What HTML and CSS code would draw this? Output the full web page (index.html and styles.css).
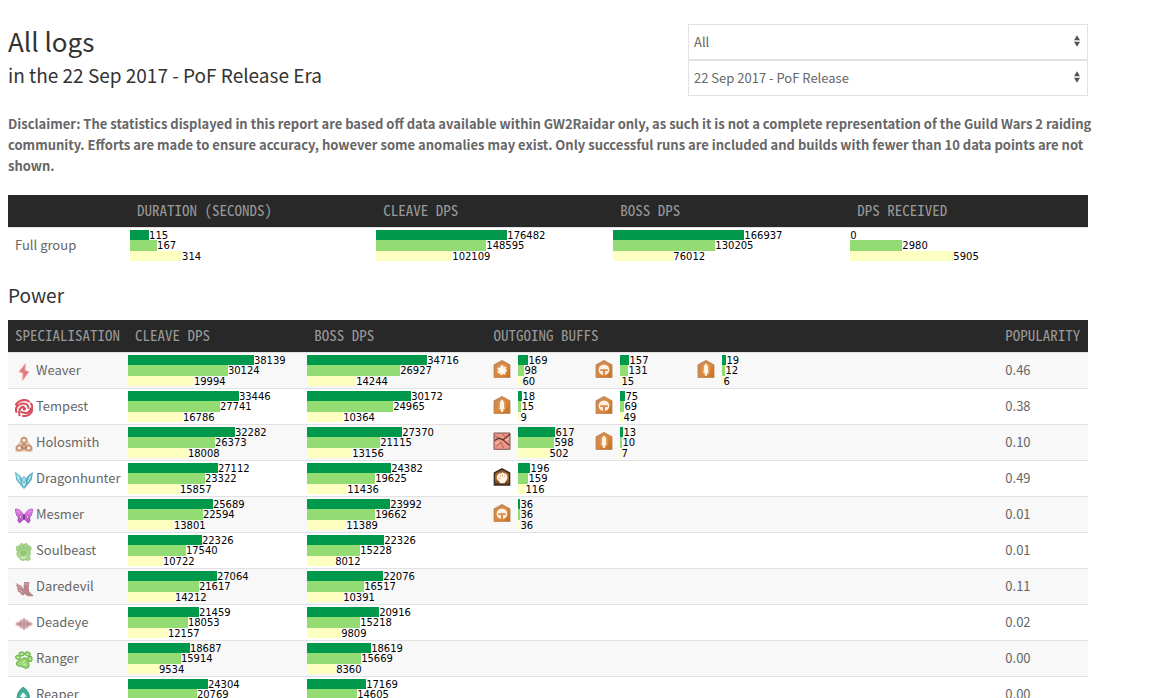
FILE: index.html
```html
<!DOCTYPE html>
<html lang="en">
<head>
<meta charset="utf-8">
<title>All logs - GW2Raidar</title>
<link rel="stylesheet" href="styles.css">
</head>
<body>
<svg class="defs" aria-hidden="true">
  <defs>
    <linearGradient id="amber" x1="0" y1="0" x2="1" y2="1"><stop offset="0" stop-color="#c48a60"/><stop offset=".5" stop-color="#d98a40"/><stop offset="1" stop-color="#c4701f"/></linearGradient>
    <linearGradient id="dark" x1="0" y1="0" x2="0" y2="1"><stop offset="0" stop-color="#8a5426"/><stop offset=".6" stop-color="#c07430"/><stop offset="1" stop-color="#4a3018"/></linearGradient>
    <linearGradient id="ice" x1="0" y1="0" x2="1" y2="1"><stop offset="0" stop-color="#a8e6f2"/><stop offset="1" stop-color="#3a9fbc"/></linearGradient>
    <linearGradient id="violet" x1="0" y1="0" x2="0" y2="1"><stop offset="0" stop-color="#f08cf2"/><stop offset="1" stop-color="#b44cc6"/></linearGradient>
  </defs>
  <symbol id="house" viewBox="0 0 18 18"><path d="M9 .4 17 4.800V17.600H1V4.800Z" fill="url(#amber)" stroke="#b87c4c" stroke-width=".8"/></symbol>
  <symbol id="burst" viewBox="0 0 18 18"><use href="#house"/><circle cx="9" cy="10" r="5.200" fill="#efb880" opacity=".7"/><path d="m9.500 4.600.9 3 3.200-.9-1.300 2.700 2.300 1.400-2.600.9.500 3-2.600-1.300-2 2-.6-2.700-3 .2 1.800-2.400-2.100-2 2.800-.2Z" fill="#fffaf0"/></symbol>
  <symbol id="helm" viewBox="0 0 18 18"><use href="#house"/><circle cx="9" cy="9.800" r="5.400" fill="#fff0e2"/><path d="M5.200 9.200h7.600v1.800h-2.700v4.200H7.900V11H5.200Z" fill="#d68c50"/></symbol>
  <symbol id="blade" viewBox="0 0 18 18"><use href="#house"/><ellipse cx="9" cy="9.500" rx="3.800" ry="6" fill="#e9a860" opacity=".7"/><path d="M9 3.600c1.500 1.200 2 2.600 2 4v4.200h.8v1h-1.600v3H7.800v-3H6.200v-1H7V7.600c0-1.400.5-2.800 2-4Z" fill="#fff4e4"/></symbol>
  <symbol id="fist" viewBox="0 0 18 18"><path d="M9 .9 16.600 5V17.100H1.400V5Z" fill="url(#dark)" stroke="#3a2c20" stroke-width="1.500"/><path d="M4.600 7 6.200 5.200 8 5.400 9.300 4.300l1.700.9 1.800.4 1.300 2 .2 3.200-1.600 2.800-1.200 1.600H7l-.8-1.800-2.200-2.300-.2-2.600Z" fill="#fff4e6"/><path d="m7 6.800.7 2.500m1.700-3 .3 2.700m2-2.400-.2 2.500M5 10l3 1" stroke="#cfa27a" stroke-width=".6"/></symbol>
  <symbol id="claw" viewBox="0 0 18 18"><path fill="#ef9486" stroke="#7c5450" stroke-width="1" d="M1 1H17V17.300H1Z"/><path d="M1.500 8.500 6 6.200l4 1.700L17 2.300M10 7.900l6.500 5.500" fill="none" stroke="#4a2e2c" stroke-width="1.200"/><path d="m2.800 14.800 5-4.400M9.500 1.500 12 5M1.500 3.500l4.500 2.700M8 10.300l2.500 5.700" fill="none" stroke="#8c5852" stroke-width=".8"/><path d="m2 12 4-2.500M12 8.500l4-2" stroke="#ffbcb0" stroke-width="1.100"/></symbol>
</svg>

<main class="page">
  <header class="top">
    <div class="titles">
      <h1>All logs</h1>
      <h2 class="era">in the 22 Sep 2017 - PoF Release Era</h2>
    </div>
    <form class="filters">
      <div class="pick">
        <select aria-label="Area"><option>All</option></select>
        <svg viewBox="0 0 6 12" aria-hidden="true"><path d="M3 .3 6 5.300H0ZM0 6.700H6L3 11.700Z"/></svg>
      </div>
      <div class="pick">
        <select aria-label="Era"><option>22 Sep 2017 - PoF Release</option></select>
        <svg viewBox="0 0 6 12" aria-hidden="true"><path d="M3 .3 6 5.300H0ZM0 6.700H6L3 11.700Z"/></svg>
      </div>
    </form>
  </header>

  <p class="note">Disclaimer: The statistics displayed in this report are based off data available within GW2Raidar only, as such it is not a complete representation of the Guild Wars 2 raiding community. Efforts are made to ensure accuracy, however some anomalies may exist. Only successful runs are included and builds with fewer than 10 data points are not shown.</p>

  <table class="group">
    <colgroup><col class="g-name"><col class="g-time"><col class="g-stat"><col class="g-stat"><col></colgroup>
    <thead><tr><td></td><th scope="col">Duration (seconds)</th><th scope="col">Cleave DPS</th><th scope="col">Boss DPS</th><th scope="col">DPS received</th></tr></thead>
    <tbody><tr>
      <th scope="row">Full group</th>
      <td><div class="bars"><span><i style="width:19px"></i>115</span><span><i style="width:27px"></i>167</span><span><i style="width:52px"></i>314</span></div></td>
      <td><div class="bars"><span><i style="width:131px"></i>176482</span><span><i style="width:110px"></i>148595</span><span><i style="width:76px"></i>102109</span></div></td>
      <td><div class="bars"><span><i style="width:131px"></i>166937</span><span><i style="width:102px"></i>130205</span><span><i style="width:60px"></i>76012</span></div></td>
      <td><div class="bars"><span><i style="width:0px"></i>0</span><span><i style="width:52px"></i>2980</span><span><i style="width:103px"></i>5905</span></div></td>
    </tr></tbody>
  </table>

  <h2 class="section">Power</h2>

  <table class="builds">
    <colgroup><col class="b-name"><col class="b-dps"><col class="b-dps"><col class="b-buffs"><col></colgroup>
    <thead><tr><th scope="col">Specialisation</th><th scope="col">Cleave DPS</th><th scope="col">Boss DPS</th><th scope="col">Outgoing buffs</th><th scope="col">Popularity</th></tr></thead>
    <tbody>
    <tr>
      <th scope="row"><div class="spec"><svg viewBox="0 0 18 18"><path d="M10.500.5 4 8.800l4 1.500L7.500 17.500 14 8.800l-4-1.500Z" fill="#e0787e" stroke="#eeb0b2" stroke-width=".9"/></svg>Weaver</div></th>
      <td><div class="bars"><span><i style="width:126px"></i>38139</span><span><i style="width:100px"></i>30124</span><span><i style="width:66px"></i>19994</span></div></td>
      <td><div class="bars"><span><i style="width:120px"></i>34716</span><span><i style="width:93px"></i>26927</span><span><i style="width:49px"></i>14244</span></div></td>
      <td><div class="buffs">
        <div class="buff"><svg><use href="#burst"/></svg><div class="bars"><span><i style="width:10px"></i>169</span><span><i style="width:6px"></i>98</span><span><i style="width:4px"></i>60</span></div></div>
        <div class="buff"><svg><use href="#helm"/></svg><div class="bars"><span><i style="width:9px"></i>157</span><span><i style="width:8px"></i>131</span><span><i style="width:1px"></i>15</span></div></div>
        <div class="buff"><svg><use href="#blade"/></svg><div class="bars"><span><i style="width:4px"></i>19</span><span><i style="width:3px"></i>12</span><span><i style="width:1px"></i>6</span></div></div>
      </div></td>
      <td class="pop">0.46</td>
    </tr>
    <tr>
      <th scope="row"><div class="spec"><svg viewBox="0 0 18 18"><g fill="none" stroke="#d4505c" stroke-width="2.100" stroke-linecap="round"><path d="M1 5.500C4 .8 10-.2 14 2.500M1.300 13C-.2 8.500 3 4.500 8 4.500c3.500 0 5.500 2 5.500 4.500M4.500 16.300C3.500 12 5 8 8.500 7.800M16 4.500c2.500 4 1.500 8.500-1.500 11M6.500 13c4 2 8.500 1 9.500-3.500M8 17c2.500.3 4-.2 5.500-1.200"/></g><circle cx="9.300" cy="9.800" r="1.700" fill="#cf4652"/><path d="M3 5.500C6 2.500 10 2 13 4M3 12c-.5-3 2-5.700 5-5.800" fill="none" stroke="#f5b8bc" stroke-width=".9"/></svg>Tempest</div></th>
      <td><div class="bars"><span><i style="width:111px"></i>33446</span><span><i style="width:92px"></i>27741</span><span><i style="width:55px"></i>16786</span></div></td>
      <td><div class="bars"><span><i style="width:104px"></i>30172</span><span><i style="width:86px"></i>24965</span><span><i style="width:36px"></i>10364</span></div></td>
      <td><div class="buffs">
        <div class="buff"><svg><use href="#blade"/></svg><div class="bars"><span><i style="width:4px"></i>18</span><span><i style="width:3px"></i>15</span><span><i style="width:2px"></i>9</span></div></div>
        <div class="buff"><svg><use href="#helm"/></svg><div class="bars"><span><i style="width:5px"></i>75</span><span><i style="width:4px"></i>69</span><span><i style="width:3px"></i>49</span></div></div>
      </div></td>
      <td class="pop">0.38</td>
    </tr>
    <tr>
      <th scope="row"><div class="spec"><svg viewBox="0 0 18 18"><path d="M9 .8 13.300 7 17.600 12.500v4H.4v-4L4.700 7Z" fill="#e3c4ae"/><g fill="#f6ece4" stroke="#cc9a78" stroke-width="2"><circle cx="9" cy="5.300" r="2.600"/><circle cx="4.300" cy="13" r="2.600"/><circle cx="13.700" cy="13" r="2.600"/></g><path d="M9 7.500 12 13l-3 1.500L6 13Z" fill="#b07c5c"/><circle cx="9" cy="11.500" r="1" fill="#f0dccc"/></svg>Holosmith</div></th>
      <td><div class="bars"><span><i style="width:107px"></i>32282</span><span><i style="width:87px"></i>26373</span><span><i style="width:60px"></i>18008</span></div></td>
      <td><div class="bars"><span><i style="width:95px"></i>27370</span><span><i style="width:73px"></i>21115</span><span><i style="width:45px"></i>13156</span></div></td>
      <td><div class="buffs">
        <div class="buff"><svg><use href="#claw"/></svg><div class="bars"><span><i style="width:37px"></i>617</span><span><i style="width:36px"></i>598</span><span><i style="width:31px"></i>502</span></div></div>
        <div class="buff"><svg><use href="#blade"/></svg><div class="bars"><span><i style="width:3px"></i>13</span><span><i style="width:2px"></i>10</span><span><i style="width:1px"></i>7</span></div></div>
      </div></td>
      <td class="pop">0.10</td>
    </tr>
    <tr>
      <th scope="row"><div class="spec"><svg viewBox="0 0 18 18"><path d="M.5 1.500 5 5l1.500 3L9 5.500 11.500 8 13 5l4.500-3.500-1.300 7.500-2.700 3.500L9 17.500l-4.500-5L1.800 9Z" fill="url(#ice)" stroke="#4aa6bc" stroke-width=".8"/><path d="m2.500 5 3 6M15.500 5l-3 6M7 10l2 5 2-5M9 7v3" fill="none" stroke="#dcf8fc" stroke-width="1"/><path d="m5 7.500 2 4.500m6-4.500L11 12" stroke="#2f8ba8" stroke-width=".8"/></svg>Dragonhunter</div></th>
      <td><div class="bars"><span><i style="width:90px"></i>27112</span><span><i style="width:77px"></i>23322</span><span><i style="width:52px"></i>15857</span></div></td>
      <td><div class="bars"><span><i style="width:84px"></i>24382</span><span><i style="width:68px"></i>19625</span><span><i style="width:40px"></i>11436</span></div></td>
      <td><div class="buffs">
        <div class="buff"><svg><use href="#fist"/></svg><div class="bars"><span><i style="width:12px"></i>196</span><span><i style="width:10px"></i>159</span><span><i style="width:7px"></i>116</span></div></div>
      </div></td>
      <td class="pop">0.49</td>
    </tr>
    <tr>
      <th scope="row"><div class="spec"><svg viewBox="0 0 18 18"><path d="M.5 2C4 2 6.500 4 8.300 7.500h1.400C11.500 4 14 2 17.500 2c0 3-.6 5.500-2 7.500l-1 .8.700 3.200-1.700 2.500-2-1.500L9 11.500l-2.500 3-2 1.500-1.700-2.500.7-3.200-1-.8C1.100 7.500.5 5 .5 2Z" fill="url(#violet)" stroke="#a04cae" stroke-width=".8"/><circle cx="5.600" cy="10" r="1.300" fill="#fbe4fc" stroke="#7a3488" stroke-width=".6"/><circle cx="12.400" cy="10" r="1.300" fill="#fbe4fc" stroke="#7a3488" stroke-width=".6"/><path d="M9 7.500V12.500" stroke="#5c2a6a" stroke-width="1.300"/></svg>Mesmer</div></th>
      <td><div class="bars"><span><i style="width:85px"></i>25689</span><span><i style="width:75px"></i>22594</span><span><i style="width:46px"></i>13801</span></div></td>
      <td><div class="bars"><span><i style="width:83px"></i>23992</span><span><i style="width:68px"></i>19662</span><span><i style="width:39px"></i>11389</span></div></td>
      <td><div class="buffs">
        <div class="buff"><svg><use href="#helm"/></svg><div class="bars"><span><i style="width:2px"></i>36</span><span><i style="width:2px"></i>36</span><span><i style="width:2px"></i>36</span></div></div>
      </div></td>
      <td class="pop">0.01</td>
    </tr>
    <tr>
      <th scope="row"><div class="spec"><svg viewBox="0 0 18 18"><g fill="#a9d48c" stroke="#8cc26e" stroke-width=".7"><ellipse cx="3.200" cy="5.500" rx="2" ry="2.700"/><ellipse cx="6.700" cy="3.200" rx="2" ry="2.800"/><ellipse cx="10.800" cy="3.200" rx="2" ry="2.800"/><ellipse cx="14.200" cy="5.500" rx="1.900" ry="2.800"/><path d="M2 9.500c1-3 4-4 7-4s5.600 1.500 6.300 4.300c.4 2-.8 3-.8 4.200 1 .8 1 2 .2 3-1.500.8-3 .2-4.200-.2-2 1-5 .8-6-1.300C3.500 13.500 1 12.500 2 9.500Z"/></g><path d="M6 14c2 1.500 4 1 5-1" stroke="#dff2d0" stroke-width="1.200" fill="none"/><circle cx="8.500" cy="10" r="2.800" fill="#8fc772"/></svg>Soulbeast</div></th>
      <td><div class="bars"><span><i style="width:74px"></i>22326</span><span><i style="width:58px"></i>17540</span><span><i style="width:35px"></i>10722</span></div></td>
      <td><div class="bars"><span><i style="width:77px"></i>22326</span><span><i style="width:53px"></i>15228</span><span><i style="width:28px"></i>8012</span></div></td>
      <td></td>
      <td class="pop">0.01</td>
    </tr>
    <tr>
      <th scope="row"><div class="spec"><svg viewBox="0 0 18 18"><path d="M0 3.500 6.500 7 8.500 10 9 3h5.500l-.8 6 .8 4 3.500 3v1.300h-5.500l-3-2.500-.5 1.700-3-1-1-2-2.500-1 .8-1L1.500 9.500l1.500-.3L.8 6.200l1.500-.2Z" fill="#b9868c"/><path d="m3 6.300 4 3.500m-3 .7 4 3M9.500 5h4" stroke="#dcbcc0" fill="none" stroke-width=".8"/></svg>Daredevil</div></th>
      <td><div class="bars"><span><i style="width:89px"></i>27064</span><span><i style="width:71px"></i>21617</span><span><i style="width:47px"></i>14212</span></div></td>
      <td><div class="bars"><span><i style="width:76px"></i>22076</span><span><i style="width:57px"></i>16517</span><span><i style="width:36px"></i>10391</span></div></td>
      <td></td>
      <td class="pop">0.11</td>
    </tr>
    <tr>
      <th scope="row"><div class="spec"><svg viewBox="0 0 18 18"><path d="m0 9 3-2.500 1 .5L6 4.200l1.300.8L9 2.200 10.700 5l1.300-.8L14 7l1-.5L18 9l-3 2.500-1-.5-2 2.800-1.300-.8L9 15.800 7.300 13l-1.300.8L4 11l-1 .5Z" fill="#d3a8ae"/><path d="M3 9h12M6 6.500v5m3-6.500v8m3-6.500v5" stroke="#bc8a94" stroke-width=".9"/></svg>Deadeye</div></th>
      <td><div class="bars"><span><i style="width:71px"></i>21459</span><span><i style="width:60px"></i>18053</span><span><i style="width:40px"></i>12157</span></div></td>
      <td><div class="bars"><span><i style="width:72px"></i>20916</span><span><i style="width:53px"></i>15218</span><span><i style="width:34px"></i>9809</span></div></td>
      <td></td>
      <td class="pop">0.02</td>
    </tr>
    <tr>
      <th scope="row"><div class="spec"><svg viewBox="0 0 18 18"><g fill="#b2e388" stroke="#6cb450" stroke-width="1.100"><ellipse cx="3" cy="6.500" rx="2.500" ry="1.800" transform="rotate(25 3 6.500)"/><ellipse cx="6.700" cy="3" rx="2.600" ry="1.900"/><ellipse cx="12.800" cy="3" rx="2.600" ry="2" transform="rotate(25 12.800 3)"/><ellipse cx="15" cy="8" rx="2" ry="2.600"/><path d="M1.500 12c.5-2.500 3.500-1.800 5-3.500 1.500-2 5-2.300 6 .2.500 1.500-.3 2.200.8 3.300 1.500 1.500.7 4.800-1.800 5.200-2 .3-3-1.200-4.800-1.700C4 15 1 15 1.500 12Z" fill="#9cd876"/></g><path d="m7 12 3-2m-2 4 3-1" stroke="#d4f2bc" stroke-width=".9"/></svg>Ranger</div></th>
      <td><div class="bars"><span><i style="width:62px"></i>18687</span><span><i style="width:53px"></i>15914</span><span><i style="width:31px"></i>9534</span></div></td>
      <td><div class="bars"><span><i style="width:64px"></i>18619</span><span><i style="width:54px"></i>15669</span><span><i style="width:29px"></i>8360</span></div></td>
      <td></td>
      <td class="pop">0.00</td>
    </tr>
    <tr>
      <th scope="row"><div class="spec"><svg viewBox="0 0 18 18"><path d="M8 .3c4 2 6.500 6 6.500 11L12 17H5l-3-5.500C2 7 4 3 8 .3Z" fill="#3fae94" stroke="#2a9078" stroke-width=".8"/><path d="M8.300 5.500c2.200 1.500 3.400 3.500 3.400 6L10 15H6.500L4.700 11.500c0-2.500 1.400-4.500 3.600-6Z" fill="#e4f8f2"/><path d="m5 10.500 2.500 1m4-1-2.500 1" stroke="#10695a" stroke-width="1.200"/></svg>Reaper</div></th>
      <td><div class="bars"><span><i style="width:80px"></i>24304</span><span><i style="width:69px"></i>20769</span></div></td>
      <td><div class="bars"><span><i style="width:59px"></i>17169</span><span><i style="width:50px"></i>14605</span></div></td>
      <td></td>
      <td class="pop">0.00</td>
    </tr>
    </tbody>
  </table>
</main>
</body>
</html>
```
FILE: styles.css
```css
* { box-sizing: border-box; }

body {
  margin: 0;
  background: #fff;
  color: #666;
  font: 13px/21px "Noto Sans CJK SC", "Open Sans", sans-serif;
}

.defs { position: absolute; width: 0; height: 0; }

.page { max-width: 1096px; padding: 24px 8px 0; }

.top { display: flex; justify-content: space-between; align-items: flex-start; }
h1, h2 { margin: 0; color: #333; font-weight: 400; }
h1 { margin-bottom: 3px; font-size: 26px; line-height: 34px; }
h2 { font-size: 19px; line-height: 28px; }

.filters { width: 400px; }
.pick { position: relative; height: 36px; }
.pick select {
  appearance: none;
  width: 100%;
  height: 36px;
  margin: 0;
  padding: 0 5px 2px;
  border: 1px solid #e2e2e2;
  border-radius: 0;
  background: #fff;
  color: #666;
  font: inherit;
}
.pick svg {
  position: absolute;
  top: 11px;
  right: 8px;
  width: 6px;
  height: 12px;
  fill: #555;
  pointer-events: none;
}

.note { margin: 17px -8px 19px 0; font-weight: 700; }

table { width: 100%; table-layout: fixed; border-collapse: collapse; }
th, td { padding: 0; text-align: left; font-weight: 400; }
thead { background: #282828; }
thead tr { height: 32px; }
thead th {
  padding: 0 7px 2px;
  color: #999;
  font: 15px/20px "Noto Sans Mono CJK SC", "DejaVu Sans Mono", monospace;
  text-transform: uppercase;
  white-space: nowrap;
}
tbody tr { height: 36px; border-top: 1px solid #e2e2e2; }
tbody th, .pop { padding: 0 7px 2px; white-space: nowrap; }

.g-name { width: 11.3%; }
.g-time { width: 22.8%; }
.g-stat { width: 21.95%; }
.b-name { width: 11.1%; }
.b-dps { width: 16.6%; }
.b-buffs { width: 47.4%; }

.section { margin: 18px 0 11px; }
.builds tbody tr:nth-child(odd) { background: #f8f8f8; }

.spec { display: flex; align-items: flex-end; gap: 3px; }
.spec svg { flex: none; width: 18px; height: 18px; margin-bottom: -1px; }

.bars {
  display: grid;
  grid-template-rows: 10px 11px 10px;
  color: #000;
  font: 10px/12px "DejaVu Sans", Verdana, sans-serif;
}
.bars span { display: flex; }
.bars i { flex: none; background: #00994c; }
.bars span:nth-child(2) i { background: #93dc74; }
.bars span:nth-child(3) i { background: #fcffbf; }

.buffs { display: flex; padding-left: 7px; }
.buff { display: flex; align-items: flex-start; gap: 7px; width: 102px; }
.buff > svg { flex: none; width: 18px; height: 18px; margin-top: 5px; }
```
